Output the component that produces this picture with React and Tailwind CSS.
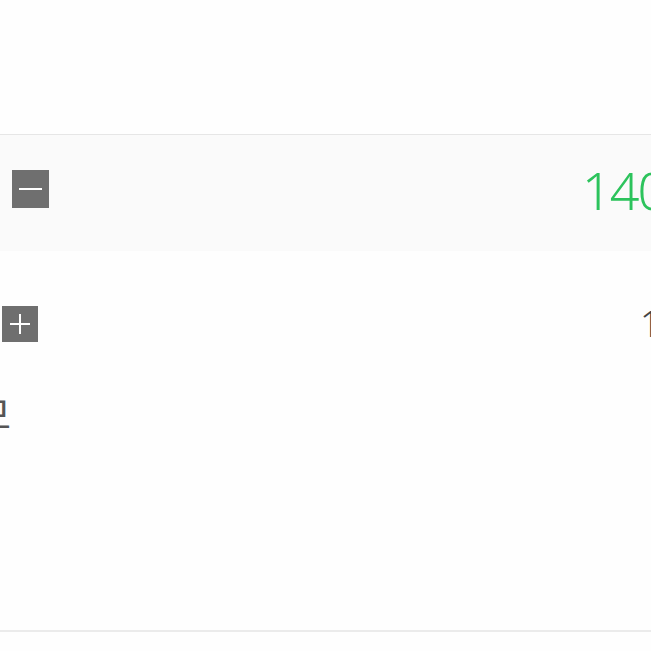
export default function App() {
  const font = { fontFamily: '"Noto Sans", "Noto Sans CJK KR", sans-serif' };
  return (
    <div className="w-[651px] h-[651px] overflow-hidden bg-[#fefefe]" style={font}>
      <div className="h-[134px]" />
      <div className="h-px bg-[#e6e6e6]" />
      <div className="h-[116px] bg-[#fafafa] flex items-start">
        <div className="ml-[12px] mt-[35px] w-[37px] h-[38px] bg-[#6f6f6f] flex items-center justify-center">
          <div className="w-[23px] h-[2px] bg-white" />
        </div>
        <div className="ml-auto mt-[29px] w-[69px] shrink-0 whitespace-nowrap text-[52px] leading-none font-light tracking-[-2px] text-[#2cc35c]">
          140,000원
        </div>
      </div>
      <div className="h-[55px]" />
      <div className="flex items-start h-[36px]">
        <div className="ml-[2px] w-[36px] h-[36px] bg-[#6f6f6f] flex items-center justify-center">
          <svg width="22" height="22" viewBox="0 0 22 22">
            <path d="M11 1v20M1 11h20" stroke="white" strokeWidth="2" />
          </svg>
        </div>
        <div className="ml-auto w-[11px] shrink-0 whitespace-nowrap text-[36px] leading-none font-light text-[#444]">
          1
        </div>
      </div>
      <div className="h-[53px]" />
      <div className="-ml-[24px] whitespace-nowrap text-[38px] leading-none text-[#555]">
        모
      </div>
      <div className="h-[197px]" />
      <div className="h-[2px] bg-[#ebebeb]" />
    </div>
  );
}
